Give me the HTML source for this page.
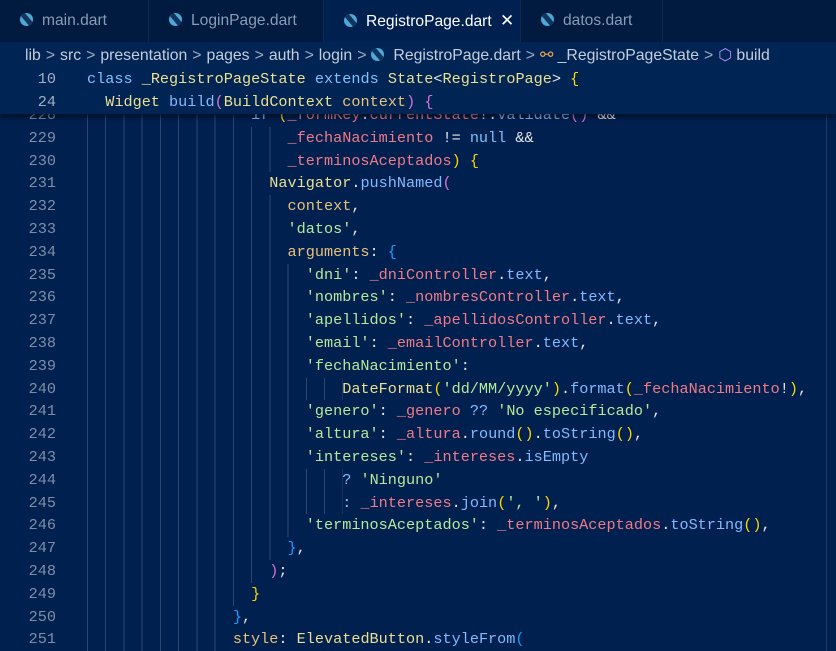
<!DOCTYPE html>
<html><head><meta charset="utf-8"><style>
*{margin:0;padding:0;box-sizing:border-box}
body{width:836px;height:651px;overflow:hidden;background:#002050;position:relative;font-family:"Liberation Sans",sans-serif}
.tabs{position:absolute;left:0;top:0;width:836px;height:42px;background:#001a40}
.tab{position:absolute;top:0;height:42px;border-right:1px solid #0a2a50;color:#8a9bb5;font-size:15.6px;line-height:42px;padding-left:20px}
.tab.act{background:#002050;color:#fff}
.di{display:inline-block;width:13px;height:13px;border-radius:50%;background:#4fa8d8;vertical-align:-1px;margin-right:9px;position:relative;overflow:hidden}
.di:after{content:"";position:absolute;left:5px;top:-3px;width:5px;height:20px;background:#12345f;transform:rotate(-40deg)}
.crumb{position:absolute;left:0;top:42px;width:836px;height:27px;background:#002555;color:#c4ccda;font-size:15.8px;line-height:27px;padding-left:25px;white-space:nowrap;z-index:6}
.crumb .s{color:#a0aac0;margin:0 5px}
.code{position:absolute;left:0;width:836px;font-family:"Liberation Mono",monospace;font-size:15.2px}
.sticky{top:68px;height:46px;background:#002555;box-shadow:0 3px 5px rgba(0,0,0,.55);z-index:5}
.ln{position:absolute;left:0;height:22.8px;line-height:22.8px;white-space:pre;width:836px}
.num{position:absolute;left:0;width:56px;text-align:right;color:#7f8ea6}
.txt{position:absolute;left:87px;color:#e6e6e6}
.g{position:absolute;left:87px;top:0;height:22.8px;background:repeating-linear-gradient(to right,#2c4672 0 1px,transparent 1px 18.24px)}
.k{color:#7fc0ff}.c{color:#ecdf8f}.f{color:#84b8ff}.s2{color:#b6e89a}.v{color:#f07a86}.p{color:#e8c07a}
.y{color:#ffd700}.m{color:#da70d6}.b{color:#179fff}.o{color:#e6e6e6}
</style></head><body>
<div class="tabs">
<div class="tab" style="left:0;width:149px"><span class="di"></span>main.dart</div>
<div class="tab" style="left:149px;width:175px"><span class="di"></span>LoginPage.dart</div>
<div class="tab act" style="left:324px;width:197px"><span class="di"></span>RegistroPage.dart <span style="margin-left:4px;font-size:17px">✕</span></div>
<div class="tab" style="left:521px;width:142px"><span class="di"></span>datos.dart</div>
</div>
<div class="crumb">lib<span class="s">&gt;</span>src<span class="s">&gt;</span>presentation<span class="s">&gt;</span>pages<span class="s">&gt;</span>auth<span class="s">&gt;</span>login<span class="s">&gt;</span><span class="di"></span>RegistroPage.dart<span class="s">&gt;</span><span style="color:#e8a050">⚯</span> _RegistroPageState<span class="s">&gt;</span><span style="color:#b58cff">⬡</span> build</div>
<div class="code sticky">
<div class="ln" style="top:0px"><span class="num" style="color:#a0aec4">10</span><span class="txt"><span class="k">class</span> <span class="c">_RegistroPageState</span> <span class="k">extends</span> <span class="c">State</span>&lt;<span class="c">RegistroPage</span>&gt; <span class="y">{</span></span></div>
<div class="ln" style="top:23px"><span class="num" style="color:#a0aec4">24</span><span class="txt">  <span class="c">Widget</span> <span class="f">build</span><span class="m">(</span><span class="c">BuildContext</span> <span class="p">context</span><span class="m">)</span> <span class="m">{</span></span></div>
</div>
<div class="code" style="top:104px">
<div class="ln" style="top:0"><span class="num">228</span><span class="g" style="width:164px"></span><span class="txt">                  <span class="k">if</span> <span class="y">(</span><span class="v">_formKey</span>.<span class="v">currentState</span>!.<span class="f">validate</span><span class="m">()</span> &amp;&amp;</span></div>
<div class="ln" style="top:22.8px"><span class="num">229</span><span class="g" style="width:200px"></span><span class="txt">                      <span class="v">_fechaNacimiento</span> != <span class="k">null</span> &amp;&amp;</span></div>
<div class="ln" style="top:45.6px"><span class="num">230</span><span class="g" style="width:200px"></span><span class="txt">                      <span class="v">_terminosAceptados</span><span class="y">)</span> <span class="y">{</span></span></div>
<div class="ln" style="top:68.4px"><span class="num">231</span><span class="g" style="width:182px"></span><span class="txt">                    <span class="c">Navigator</span>.<span class="f">pushNamed</span><span class="m">(</span></span></div>
<div class="ln" style="top:91.2px"><span class="num">232</span><span class="g" style="width:200px"></span><span class="txt">                      <span class="p">context</span>,</span></div>
<div class="ln" style="top:114px"><span class="num">233</span><span class="g" style="width:200px"></span><span class="txt">                      <span class="s2">'datos'</span>,</span></div>
<div class="ln" style="top:136.8px"><span class="num">234</span><span class="g" style="width:200px"></span><span class="txt">                      <span class="p">arguments</span>: <span class="b">{</span></span></div>
<div class="ln" style="top:159.6px"><span class="num">235</span><span class="g" style="width:219px"></span><span class="txt">                        <span class="s2">'dni'</span>: <span class="v">_dniController</span>.<span class="f">text</span>,</span></div>
<div class="ln" style="top:182.4px"><span class="num">236</span><span class="g" style="width:219px"></span><span class="txt">                        <span class="s2">'nombres'</span>: <span class="v">_nombresController</span>.<span class="f">text</span>,</span></div>
<div class="ln" style="top:205.2px"><span class="num">237</span><span class="g" style="width:219px"></span><span class="txt">                        <span class="s2">'apellidos'</span>: <span class="v">_apellidosController</span>.<span class="f">text</span>,</span></div>
<div class="ln" style="top:228px"><span class="num">238</span><span class="g" style="width:219px"></span><span class="txt">                        <span class="s2">'email'</span>: <span class="v">_emailController</span>.<span class="f">text</span>,</span></div>
<div class="ln" style="top:250.8px"><span class="num">239</span><span class="g" style="width:219px"></span><span class="txt">                        <span class="s2">'fechaNacimiento'</span>:</span></div>
<div class="ln" style="top:273.6px"><span class="num">240</span><span class="g" style="width:256px"></span><span class="txt">                            <span class="c">DateFormat</span><span class="y">(</span><span class="s2">'dd/MM/yyyy'</span><span class="y">)</span>.<span class="f">format</span><span class="y">(</span><span class="v">_fechaNacimiento</span>!<span class="y">)</span>,</span></div>
<div class="ln" style="top:296.4px"><span class="num">241</span><span class="g" style="width:219px"></span><span class="txt">                        <span class="s2">'genero'</span>: <span class="v">_genero</span> <span class="k">??</span> <span class="s2">'No especificado'</span>,</span></div>
<div class="ln" style="top:319.2px"><span class="num">242</span><span class="g" style="width:219px"></span><span class="txt">                        <span class="s2">'altura'</span>: <span class="v">_altura</span>.<span class="f">round</span><span class="y">()</span>.<span class="f">toString</span><span class="y">()</span>,</span></div>
<div class="ln" style="top:342px"><span class="num">243</span><span class="g" style="width:219px"></span><span class="txt">                        <span class="s2">'intereses'</span>: <span class="v">_intereses</span>.<span class="f">isEmpty</span></span></div>
<div class="ln" style="top:364.8px"><span class="num">244</span><span class="g" style="width:256px"></span><span class="txt">                            <span class="k">?</span> <span class="s2">'Ninguno'</span></span></div>
<div class="ln" style="top:387.6px"><span class="num">245</span><span class="g" style="width:256px"></span><span class="txt">                            <span class="k">:</span> <span class="v">_intereses</span>.<span class="f">join</span><span class="y">(</span><span class="s2">', '</span><span class="y">)</span>,</span></div>
<div class="ln" style="top:410.4px"><span class="num">246</span><span class="g" style="width:219px"></span><span class="txt">                        <span class="s2">'terminosAceptados'</span>: <span class="v">_terminosAceptados</span>.<span class="f">toString</span><span class="y">()</span>,</span></div>
<div class="ln" style="top:433.2px"><span class="num">247</span><span class="g" style="width:200px"></span><span class="txt">                      <span class="b">}</span>,</span></div>
<div class="ln" style="top:456px"><span class="num">248</span><span class="g" style="width:182px"></span><span class="txt">                    <span class="m">)</span>;</span></div>
<div class="ln" style="top:478.8px"><span class="num">249</span><span class="g" style="width:164px"></span><span class="txt">                  <span class="y">}</span></span></div>
<div class="ln" style="top:501.6px"><span class="num">250</span><span class="g" style="width:146px"></span><span class="txt">                <span class="b">}</span>,</span></div>
<div class="ln" style="top:524.4px"><span class="num">251</span><span class="g" style="width:146px"></span><span class="txt">                <span class="p">style</span>: <span class="c">ElevatedButton</span>.<span class="f">styleFrom</span><span class="b">(</span></span></div>
</div>
<div style="position:absolute;left:826px;top:114px;width:1px;height:537px;background:#1c3a66"></div>
</body></html>
